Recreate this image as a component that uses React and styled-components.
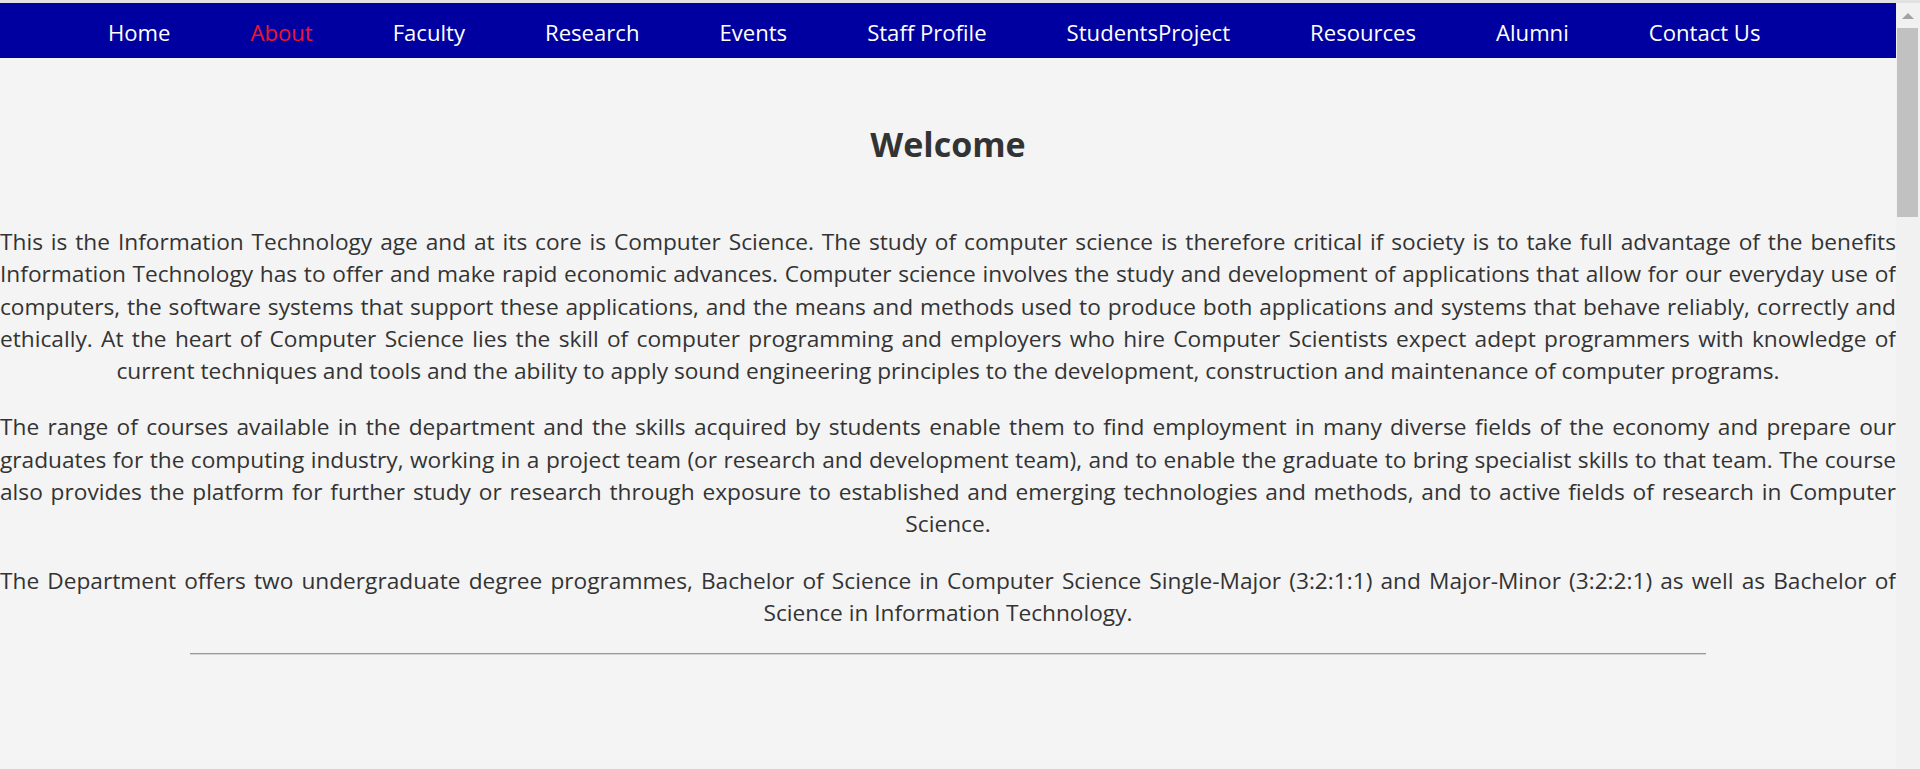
import React from 'react'
import styled, { createGlobalStyle } from 'styled-components'

const GlobalStyle = createGlobalStyle`
  html, body {
    margin: 0;
    padding: 0;
    height: 100%;
    overflow: hidden;
  }
  body {
    background: #e1e1e1;
    font-family: "Open Sans", "Noto Sans", sans-serif;
  }
`

// browser window: page on the left, the scrollbar drawn on the right
const Frame = styled.div`
  margin-top: 3px;
  height: calc(100vh - 3px);
  display: flex;
  overflow: hidden;
  background: #f4f4f4;
`

const Page = styled.div`
  flex: 1;
  min-width: 0;
`

const ScrollTrack = styled.div`
  width: 24px;
  flex-shrink: 0;
  background: #f1f1f1;
  display: flex;
  flex-direction: column;
`

const ScrollArrow = styled.div`
  height: 25px;
  display: flex;
  align-items: center;
  justify-content: center;
  padding-right: 1px;

  &::before {
    content: '';
    border-left: 6px solid transparent;
    border-right: 6px solid transparent;
    border-bottom: 6px solid #a3a3a3;
  }
`

const ScrollThumb = styled.div`
  height: 189px;
  margin: 0 2px 0 1px;
  background: #c1c1c1;
`

const NavBar = styled.nav`
  height: 55px;
  background: #0000a0;
  display: flex;
  align-items: center;
  gap: 80px;
  padding-left: 108px;
`

const NavLink = styled.a`
  color: ${p => (p.$active ? '#f0142d' : '#ffffff')};
  font-size: 22.1px;
  text-decoration: none;
  white-space: nowrap;
  padding-top: 2px;
`

const Main = styled.main`
  color: #333333;
`

const Title = styled.h2`
  margin: 62px 0 58px;
  font-size: 34px;
  line-height: 48px;
  font-weight: 700;
  text-align: center;
`

const Para = styled.p`
  margin: 0 0 24px;
  font-size: 22.7px;
  line-height: 32.3px;
  text-align: justify;
  text-align-last: center;
`

const Rule = styled.hr`
  width: 80%;
  margin: 0 auto;
  border: none;
  border-top: 1px solid #9a9a9a;
  border-bottom: 1px solid #d6d6d6;
`

const links = [
  'Home',
  'About',
  'Faculty',
  'Research',
  'Events',
  'Staff Profile',
  'StudentsProject',
  'Resources',
  'Alumni',
  'Contact Us',
]

export default function App() {
  return (
    <>
      <GlobalStyle />
      <Frame>
        <Page>
          <NavBar>
            {links.map(l => (
              <NavLink key={l} href='#' $active={l === 'About'}>{l}</NavLink>
            ))}
          </NavBar>
          <Main>
            <Title>Welcome</Title>
            <Para>
              This is the Information Technology age and at its core is Computer Science. The study of computer science is therefore critical if society is to take full advantage of the benefits Information Technology has to offer and make rapid economic advances. Computer science involves the study and development of applications that allow for our everyday use of computers, the software systems that support these applications, and the means and methods used to produce both applications and systems that behave reliably, correctly and ethically. At the heart of Computer Science lies the skill of computer programming and employers who hire Computer Scientists expect adept programmers with knowledge of current techniques and tools and the ability to apply sound engineering principles to the development, construction and maintenance of computer programs.
            </Para>
            <Para>
              The range of courses available in the department and the skills acquired by students enable them to find employment in many diverse fields of the economy and prepare our graduates for the computing industry, working in a project team (or research and development team), and to enable the graduate to bring specialist skills to that team. The course also provides the platform for further study or research through exposure to established and emerging technologies and methods, and to active fields of research in Computer Science.
            </Para>
            <Para>
              The Department offers two undergraduate degree programmes, Bachelor of Science in Computer Science Single-Major (3:2:1:1) and Major-Minor (3:2:2:1) as well as Bachelor of Science in Information Technology.
            </Para>
            <Rule />
          </Main>
        </Page>
        <ScrollTrack>
          <ScrollArrow />
          <ScrollThumb />
        </ScrollTrack>
      </Frame>
    </>
  )
}
